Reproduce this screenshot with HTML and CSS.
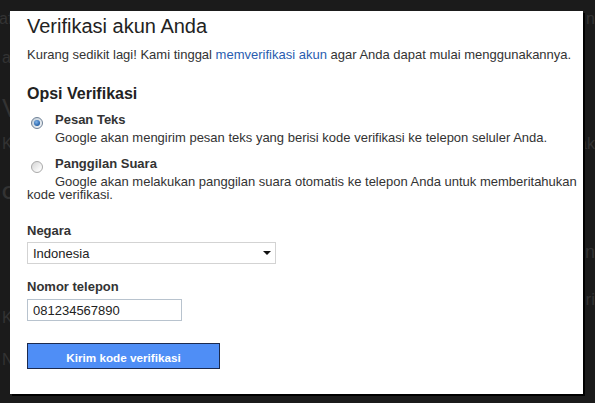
FILE: index.html
```html
<!DOCTYPE html>
<html lang="id">
<head>
  <meta charset="UTF-8" />
  <meta name="viewport" content="width=device-width, initial-scale=1" />
  <title>Verifikasi akun Anda</title>
  <link rel="stylesheet" href="styles.css">
</head>
<body>

  <!-- Halaman di belakang overlay -->
  <div class="backdrop">
    <div class="ghost g1"><span>af</span><span>n</span></div>
    <div class="ghost g2"><span>a</span></div>
    <div class="ghost g3"><span>V</span></div>
    <div class="ghost g4"><span>K</span><span>ak</span></div>
    <div class="ghost g5"><span>O</span></div>
    <div class="ghost g6"><span></span><span>An</span></div>
    <div class="ghost g7"><span></span><span>eri</span></div>
    <div class="ghost g8"><span>K</span></div>
    <div class="ghost g9"><span>N</span></div>
    <div class="ghost g10"><span>Nomor telepon</span></div>
  </div>

  <div class="dialog">
    <h1>Verifikasi akun Anda</h1>
    <p class="intro">Kurang sedikit lagi! Kami tinggal <a href="#">memverifikasi akun</a> agar Anda dapat mulai menggunakannya.</p>

    <h2>Opsi Verifikasi</h2>

    <div class="option first">
      <div class="opt-head"><span class="radio checked"></span><b>Pesan Teks</b></div>
      <div class="opt-desc">Google akan mengirim pesan teks yang berisi kode verifikasi ke telepon seluler Anda.</div>
    </div>

    <div class="option">
      <div class="opt-head"><span class="radio"></span><b>Panggilan Suara</b></div>
      <div class="opt-desc">Google akan melakukan panggilan suara otomatis ke telepon Anda untuk memberitahukan kode verifikasi.</div>
    </div>

    <label class="field-label country">Negara</label>
    <div class="select-wrap">
      <select>
        <option>Indonesia</option>
      </select>
    </div>

    <label class="field-label phone">Nomor telepon</label>
    <input class="phone-input" type="text" value="081234567890" />

    <button class="send-btn">Kirim kode verifikasi</button>
  </div>

</body>
</html>
```

FILE: styles.css
```css
html {
  overflow: hidden;
}

body {
  margin: 0;
  width: 595px;
  height: 403px;
  overflow: hidden;
  background-color: #1b1b1b;
  font-family: 'Liberation Sans', Arial, sans-serif;
  position: relative;
}

/* Тло: сторінка під оверлеєм */
.backdrop {
  display: flex;
  flex-direction: column;
  height: 403px;
  color: #333;
}

.ghost {
  display: flex;
  justify-content: space-between;
  white-space: nowrap;
  padding: 0 0 0 2px;
  font-size: 16px;
  height: 16px;
  line-height: 16px;
}

.g1 span:first-child { margin-left: -3px; }

.g1 { margin-top: 11px; }
.g2 { margin-top: 23px; }
.g3 { margin-top: 28px; font-size: 26px; height: 28px; line-height: 28px; }
.g4 { margin-top: 14px; }
.g5 { margin-top: 31px; font-size: 18px; font-weight: bold; height: 20px; line-height: 20px; }
.g6 { margin-top: 39px; font-size: 18px; height: 20px; line-height: 20px; }
.g7 { margin-top: 29px; font-size: 17px; height: 18px; line-height: 18px; }
.g8 { margin-top: 1px; }
.g9 { margin-top: 26px; }
.g10 { margin-top: 48px; font-size: 18px; height: 16px; line-height: 20px; }

/* Діалог поверх сторінки */
.dialog {
  position: absolute;
  left: 10px;
  top: 11px;
  width: 573px;
  height: 383px;
  box-sizing: border-box;
  padding: 3px 0 0 17px;
  background-color: #fff;
  box-shadow: 2px 2px 0 #000;
  color: #333;
  font-size: 13px;
}

h1 {
  margin: 0;
  font-size: 20px;
  line-height: 24px;
  font-weight: normal;
  color: #222;
}

.intro {
  margin: 9px 0 0;
  line-height: 16px;
}

.intro a {
  color: #2a5db0;
  text-decoration: none;
}

h2 {
  margin: 21px 0 0;
  font-size: 16px;
  line-height: 20px;
  font-weight: bold;
  color: #222;
}

.option {
  margin-top: 12px;
}

.option.first {
  margin-top: 8px;
}

.opt-head {
  display: flex;
  align-items: flex-start;
  height: 16px;
  line-height: 16px;
}

.opt-head b {
  margin-left: 12px;
}

.radio {
  width: 12px;
  height: 12px;
  margin: 5px 0 0 4px;
  box-sizing: border-box;
  border-radius: 50%;
  border: 1px solid #a9a9a9;
  background: linear-gradient(135deg, #d4d4d4, #f7f7f7 70%, #fff);
  display: flex;
  justify-content: center;
  align-items: center;
}

.radio.checked {
  border-color: #6f8196;
  background: linear-gradient(135deg, #c2ceda, #f4f6f8);
}

.radio.checked::after {
  content: "";
  width: 6px;
  height: 6px;
  border-radius: 50%;
  background: radial-gradient(circle at 40% 35%, #7fb3ea, #2461a8 70%, #1c4b85);
}

.opt-desc {
  margin-top: 3px;
  line-height: 13px;
  text-indent: 28px;
}

.field-label {
  display: block;
  font-weight: bold;
  line-height: 16px;
}

.field-label.country {
  margin-top: 22px;
}

.field-label.phone {
  margin-top: 15px;
}

.select-wrap {
  position: relative;
  width: 249px;
  margin-top: 3px;
}

.select-wrap::after {
  content: "";
  position: absolute;
  right: 5px;
  top: 9px;
  border-left: 4px solid transparent;
  border-right: 4px solid transparent;
  border-top: 4px solid #111;
}

select {
  appearance: none;
  -webkit-appearance: none;
  display: block;
  width: 249px;
  height: 22px;
  margin: 0;
  padding: 0 0 0 5px;
  border: 1px solid #d3d3d3;
  border-radius: 0;
  background-color: #fff;
  color: #222;
  font-family: 'Liberation Sans', Arial, sans-serif;
  font-size: 13px;
}

.phone-input {
  display: block;
  box-sizing: border-box;
  width: 155px;
  height: 22px;
  margin: 4px 0 0;
  padding: 0 0 0 5px;
  border: 1px solid #b8c3ce;
  color: #222;
  font-family: 'Liberation Sans', Arial, sans-serif;
  font-size: 13px;
}

.send-btn {
  display: block;
  width: 193px;
  height: 26px;
  margin-top: 22px;
  padding: 2px 0 0;
  border: 1px solid #1c2a4e;
  background-color: #4f8ef6;
  color: #fff;
  font-family: 'Liberation Sans', Arial, sans-serif;
  font-size: 11.7px;
  font-weight: bold;
  cursor: pointer;
}
```
